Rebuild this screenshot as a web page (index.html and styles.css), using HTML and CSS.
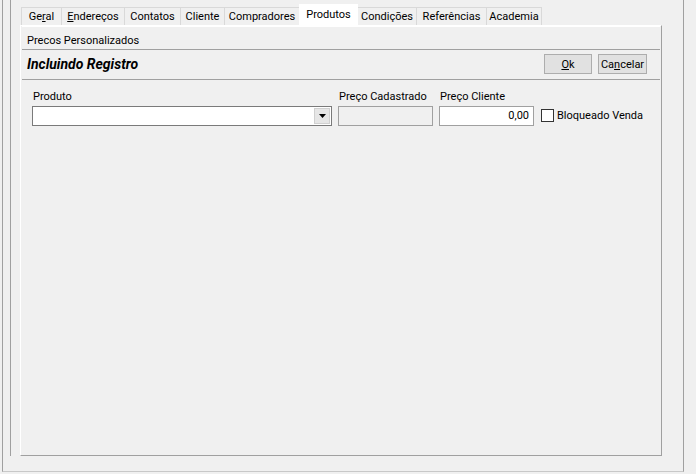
FILE: index.html
```html
<!DOCTYPE html>
<html lang="pt-BR">
<head>
    <meta charset="UTF-8">
    <title>Cadastro de Clientes</title>
    <link rel="stylesheet" href="styles.css">
</head>
<body>
    <div class="window">
        <div class="pagectl">
            <div class="tabs">
                <div class="tab tab-geral">Ge<u>r</u>al</div>
                <div class="tab tab-enderecos"><u>E</u>ndereços</div>
                <div class="tab tab-contatos">Contatos</div>
                <div class="tab tab-cliente">Cliente</div>
                <div class="tab tab-compradores">Compradores</div>
                <div class="tab tab-produtos active">Produtos</div>
                <div class="tab tab-condicoes">Condições</div>
                <div class="tab tab-referencias">Referências</div>
                <div class="tab tab-academia">Academia</div>
            </div>
            <div class="sheet">
                <div class="caption">Precos Personalizados</div>
                <div class="toolbar">
                    <span class="title">Incluindo Registro</span>
                    <div class="buttons">
                        <button class="btn btn-ok"><u>O</u>k</button>
                        <button class="btn btn-cancel">Ca<u>n</u>celar</button>
                    </div>
                </div>
                <div class="form">
                    <div class="field field-produto">
                        <label>Produto</label>
                        <div class="combo">
                            <span class="combo-btn">
                                <svg width="7" height="4" viewBox="0 0 7 4"><path d="M0 0H7L3.5 4Z" fill="#000"/></svg>
                            </span>
                        </div>
                    </div>
                    <div class="field field-preco">
                        <label>Preço Cadastrado</label>
                        <div class="edit disabled"></div>
                    </div>
                    <div class="field field-preco">
                        <label>Preço Cliente</label>
                        <div class="edit">0,00</div>
                    </div>
                    <div class="check">
                        <span class="box"></span>
                        <span>Bloqueado Venda</span>
                    </div>
                </div>
            </div>
        </div>
    </div>
</body>
</html>
```

FILE: styles.css
```css
body {
    margin: 0;
    background-color: #f0f0f0;
    font-family: Roboto, "Noto Sans", sans-serif;
    font-size: 11px;
    color: #000;
    width: 696px;
    height: 474px;
    overflow: hidden;
}
.window {
    margin-left: 2px;
    width: 673px;
    height: 471px;
    border-left: 1px solid #a0a0a0;
    border-right: 1px solid #a0a0a0;
    border-bottom: 1px solid #c8c8c8;
    padding-left: 7px;
    box-sizing: content-box;
}
.pagectl {
    width: 655px;
    height: 456px;
    border-left: 1px solid #a0a0a0;
    padding-left: 9px;
    display: flex;
    flex-direction: column;
}
.tabs {
    display: flex;
    align-items: flex-end;
    height: 25px;
    padding-left: 1px;
}
.tab {
    box-sizing: border-box;
    height: 18px;
    line-height: 18px;
    text-align: center;
    border: 1px solid #d9d9d9;
    border-bottom: none;
    margin-right: -1px;
    white-space: nowrap;
}
.tab.active {
    height: 21px;
    line-height: 19px;
    background-color: #fff;
    border-color: #fff;
    position: relative;
    z-index: 1;
}
/* tab widths as windows measures them */
.tab-geral { width: 41px; }
.tab-enderecos { width: 64px; }
.tab-contatos { width: 57px; }
.tab-cliente { width: 45px; }
.tab-compradores { width: 76px; }
.tab-produtos { width: 59px; }
.tab-condicoes { width: 60px; }
.tab-referencias { width: 71px; }
.tab-academia { width: 56px; }
.sheet {
    width: 640px;
    height: 431px;
    border-top: 1px solid #fff;
    border-left: 1px solid #fff;
    border-right: 1px solid #a0a0a0;
    border-bottom: 1px solid #a0a0a0;
    display: flex;
    flex-direction: column;
}
.caption {
    height: 22px;
    line-height: 28px;
    padding-left: 5px;
    border-top: 1px solid #fff;
    border-bottom: 1px solid #a0a0a0;
    margin: 0 1px;
}
.toolbar {
    height: 29px;
    display: flex;
    align-items: center;
    justify-content: space-between;
    border-bottom: 1px solid #a0a0a0;
    margin: 0 1px;
    padding: 0 13px 0 5px;
}
.title {
    font-weight: bold;
    font-style: italic;
    font-size: 14px;
    margin-top: -1px;
}
.buttons {
    display: flex;
    gap: 6px;
}
.btn {
    height: 20px;
    padding: 0;
    background-color: #e1e1e1;
    border: 1px solid #adadad;
    font-family: inherit;
    font-size: 11px;
    color: #000;
}
.btn-ok {
    width: 48px;
}
.btn-cancel {
    width: 49px;
}
.form {
    display: flex;
    align-items: flex-end;
    padding: 10px 0 0 11px;
    gap: 6px;
}
.field label {
    display: block;
    height: 16px;
    line-height: 14px;
    padding-left: 1px;
}
.field-produto {
    width: 300px;
}
.field-preco {
    width: 95px;
}
.combo, .edit {
    height: 18px;
    border: 1px solid #7a7a7a;
    background-color: #fff;
    position: relative;
}
.combo-btn {
    position: absolute;
    right: 1px;
    top: 1px;
    width: 16px;
    height: 16px;
    background-color: #e6e6e6;
    border: 1px solid #d0d0d0;
    box-sizing: border-box;
    display: flex;
    align-items: center;
    justify-content: center;
}
.edit {
    border-color: #a0a0a0;
    text-align: right;
    line-height: 18px;
    padding-right: 4px;
}
.edit.disabled {
    background-color: #f0f0f0;
    border-color: #a0a0a0;
}
.check {
    display: flex;
    align-items: center;
    gap: 3px;
    height: 20px;
    margin-left: 1px;
}
.box {
    width: 11px;
    height: 11px;
    border: 1px solid #333;
    background-color: #fff;
}
```
